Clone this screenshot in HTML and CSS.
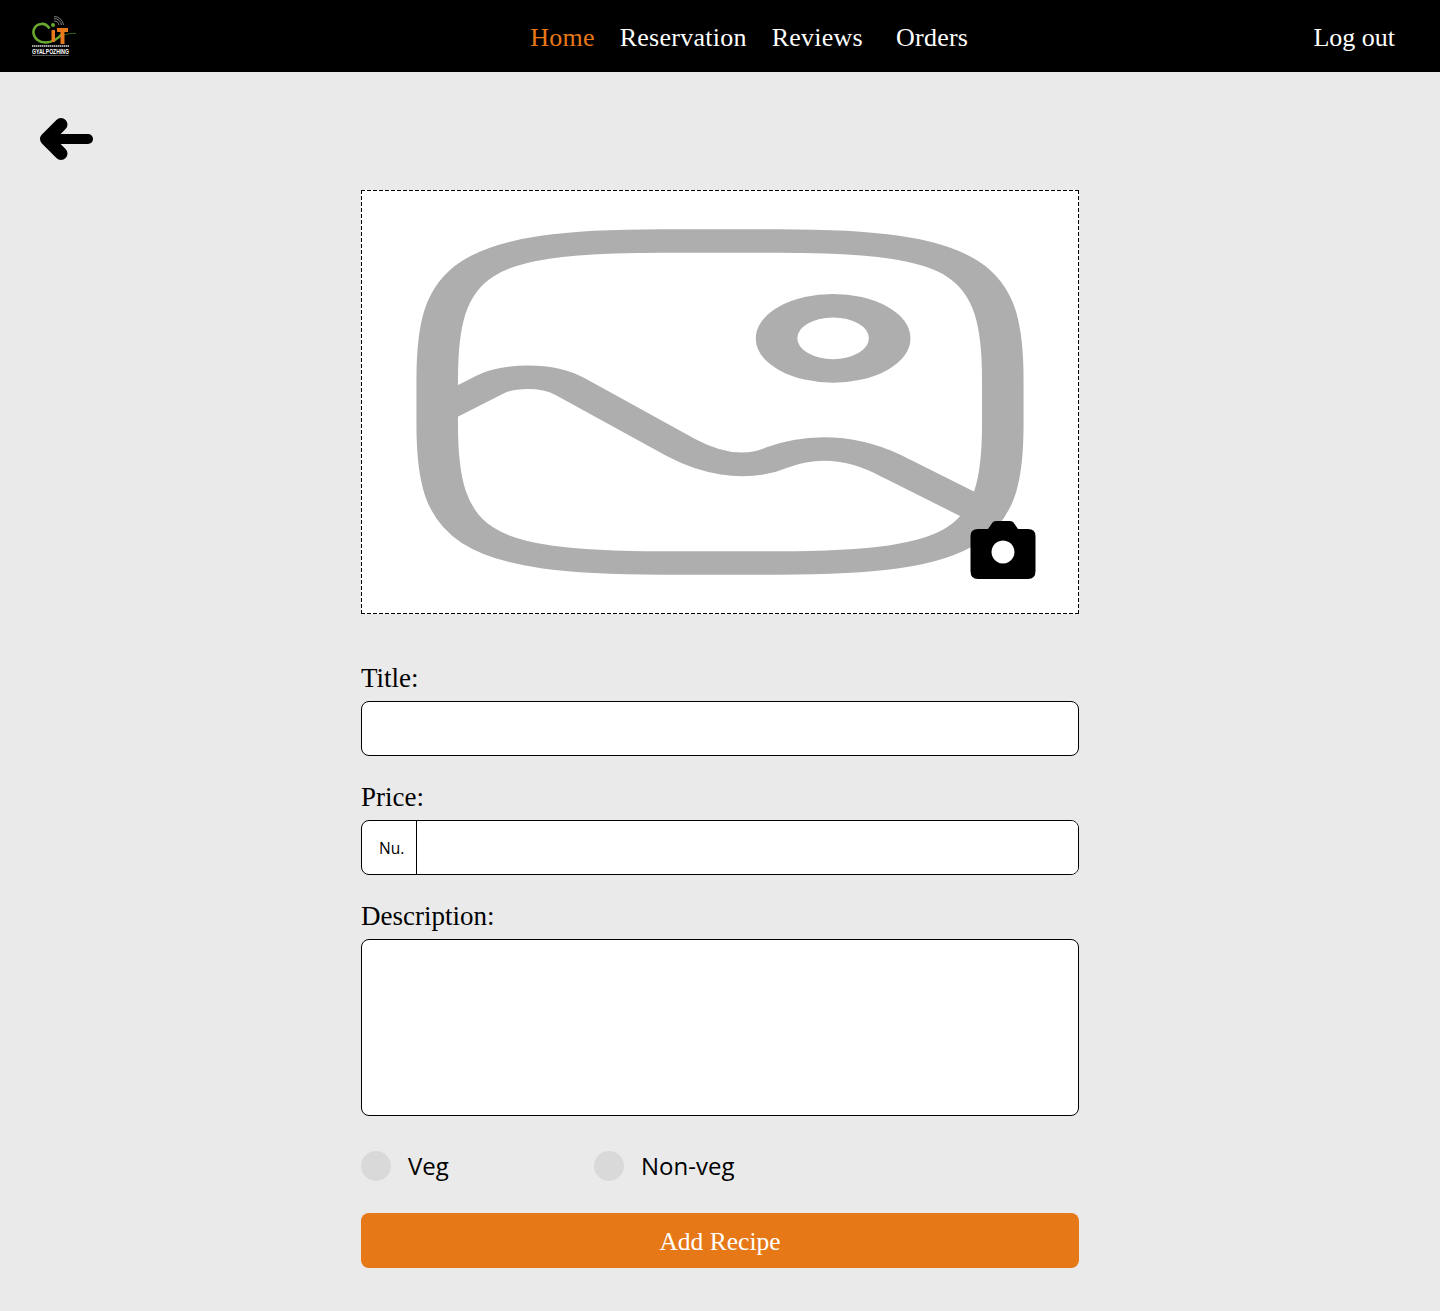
FILE: index.html
```html
<!DOCTYPE html>
<html lang="en">

<head>
    <meta charset="UTF-8">
    <title>Add Recipe</title>
    <link rel="stylesheet" href="styles.css">
</head>

<body>
    <header class="navbar">
        <a class="logo" href="#">
            <svg width="46" height="42" viewBox="32 15 46 42">
                <g fill="none" stroke="#9a9a9a" stroke-width="0.8">
                    <path d="M54 21a5 5 0 0 1 5 4" />
                    <path d="M54 18.500a7.500 7.500 0 0 1 7.500 6.500" />
                    <path d="M54 16.500a9.500 9.500 0 0 1 9.500 8.500" />
                </g>
                <path d="M49.500 28.500c-2-3-5-5-8.500-4.500-5 .5-8 4.500-7.500 9 .5 6 6 9.500 12 9.500 7 0 12-3 17-9" fill="none" stroke="#6aa92f" stroke-width="2.600" />
                <path d="M62 36c4-2 9-3 14-2.500" fill="none" stroke="#4c7a22" stroke-width="0.800" />
                <circle cx="53" cy="25" r="2" fill="#6aa92f" />
                <path d="M51.500 30h3.500v12h-3.500zM57 28h11v4h-3.500v12h-4V32H57z" fill="#e8791c" />
                <path d="M32 46h37" stroke="#ddd" stroke-width="1.500" stroke-dasharray="1.500 0.500" />
                <text class="logo-text" x="32" y="53.500" textLength="37" lengthAdjust="spacingAndGlyphs">GYALPOZHING</text>
                <path d="M32 55.500h37" stroke="#888" stroke-width="0.600" />
            </svg>
        </a>
        <nav class="nav-links">
            <a class="active" href="#">Home</a>
            <a href="#">Reservation</a>
            <a href="#">Reviews</a>
            <a class="orders" href="#">Orders</a>
        </nav>
        <a class="logout" href="#">Log out</a>
    </header>

    <main class="page">
        <a class="back" href="#">
            <svg width="54" height="42" viewBox="40 118 54 42">
                <path d="M46 139h42" fill="none" stroke="#000" stroke-width="10" stroke-linecap="round" />
                <path d="M61 124.500 46.500 139 61 153.500" fill="none" stroke="#000" stroke-width="13" stroke-linecap="round" stroke-linejoin="round" />
            </svg>
        </a>

        <form class="recipe-form">
            <div class="photo-box">
                <svg class="placeholder" viewBox="0 0 344 345" preserveAspectRatio="none">
                    <g fill="none" stroke="#aeaeae" stroke-width="23.500">
                        <path d="M140 12H204C314 12 332 40 332 150V195C332 305 314 333 204 333H140C30 333 12 305 12 195V150C12 40 30 12 140 12Z" />
                        <ellipse cx="236" cy="109" rx="32" ry="32.500" />
                        <path d="M13 181 42 155C52 146 74 144 87 157L150 218C165 232 185 242 204 228 222 216 246 214 272 239L322 283" />
                    </g>
                </svg>
                <svg class="camera" width="66" height="58" viewBox="0 0 66 58">
                    <path fill-rule="evenodd" d="M8 8H18L22.500 1.500Q23.500 0 26 0H40Q42.500 0 43.500 1.500L48 8H58Q65.500 8 65.500 15V50Q65.500 58 58 58H8Q.5 58 .5 50V15Q.5 8 8 8ZM33 19.500a11.500 11.500 0 1 0 .01 0Z" />
                </svg>
            </div>

            <label class="field">
                <span class="field-label">Title:</span>
                <input class="text-input" type="text">
            </label>

            <label class="field">
                <span class="field-label">Price:</span>
                <span class="price-input">
                    <span class="currency">Nu.</span>
                    <input type="text">
                </span>
            </label>

            <label class="field">
                <span class="field-label">Description:</span>
                <textarea class="text-input description"></textarea>
            </label>

            <div class="diet-options">
                <label class="diet veg"><input type="radio" name="diet"> Veg</label>
                <label class="diet"><input type="radio" name="diet"> Non-veg</label>
            </div>

            <button class="add-button" type="button">Add Recipe</button>
        </form>
    </main>
</body>

</html>
```

FILE: styles.css
```css
* {
    margin: 0;
    padding: 0;
    box-sizing: border-box;
}

body {
    background: #eaeaea;
    color: #000;
    font-family: "Liberation Serif", serif;
}

a {
    color: inherit;
    text-decoration: none;
}

/* Top bar */
.navbar {
    display: flex;
    align-items: center;
    justify-content: space-between;
    height: 72px;
    padding: 3px 45px 0 32px;
    background: #000;
    color: #fff;
    font-size: 26px;
}

.logo {
    display: flex;
    width: 46px;
    margin-top: -3px;
}

.logo-text {
    font-family: "Liberation Sans", sans-serif;
    font-size: 6.500px;
    font-weight: bold;
    fill: #fff;
}

.nav-links {
    display: flex;
    gap: 25px;
    margin-left: 107px;
    letter-spacing: 0.25px;
}

.nav-links .active {
    color: #e67817;
}

.nav-links .orders {
    margin-left: 8px;
}

/* Page body */
.page {
    padding: 46px 40px 43px;
}

.back {
    display: block;
    width: 54px;
    height: 42px;
}

.back svg {
    display: block;
}

.recipe-form {
    display: flex;
    flex-direction: column;
    width: 718px;
    margin: 30px auto 0;
}

.photo-box {
    position: relative;
    height: 424px;
    margin-bottom: 46px;
    background:
        repeating-linear-gradient(90deg, #000 0 4px, transparent 4px 6px) top / 100% 1px no-repeat,
        repeating-linear-gradient(90deg, #000 0 4px, transparent 4px 6px) bottom / 100% 1px no-repeat,
        repeating-linear-gradient(180deg, #000 0 4px, transparent 4px 6px) left / 1px 100% no-repeat,
        repeating-linear-gradient(180deg, #000 0 4px, transparent 4px 6px) right / 1px 100% no-repeat,
        #fff;
}

.placeholder {
    position: absolute;
    top: 39px;
    left: 55px;
    width: 608px;
    height: 346px;
}

.camera {
    position: absolute;
    top: 331px;
    left: 609px;
}

.field {
    display: block;
    margin-bottom: 23px;
}

.field-label {
    display: block;
    height: 41px;
    font-size: 27px;
    line-height: 36px;
}

.text-input {
    display: block;
    width: 100%;
    height: 55px;
    background: #fff;
    border: 1px solid #000;
    border-radius: 8px;
}

.description {
    height: 177px;
    resize: none;
}

.price-input {
    display: flex;
    height: 55px;
    background: #fff;
    border: 1px solid #000;
    border-radius: 8px;
    overflow: hidden;
}

.currency {
    width: 55px;
    padding-top: 16px;
    padding-left: 17px;
    border-right: 1px solid #000;
    font-family: "Open Sans", sans-serif;
    font-size: 15.500px;
    line-height: 22px;
}

.price-input input {
    flex: 1;
    border: 0;
}

.diet-options {
    display: flex;
    margin-top: 12px;
}

.diet {
    display: flex;
    gap: 17px;
    height: 30px;
    font-family: "Open Sans", sans-serif;
    font-size: 24px;
    line-height: 30px;
}

.veg {
    width: 233px;
}

.diet input {
    width: 30px;
    height: 30px;
    appearance: none;
    background: #d9d9d9;
    border-radius: 50%;
}

.add-button {
    height: 55px;
    margin-top: 32px;
    padding-top: 3px;
    background: #e67817;
    color: #fff;
    border: 0;
    border-radius: 8px;
    font-family: "Liberation Serif", serif;
    font-size: 25.500px;
}
```
